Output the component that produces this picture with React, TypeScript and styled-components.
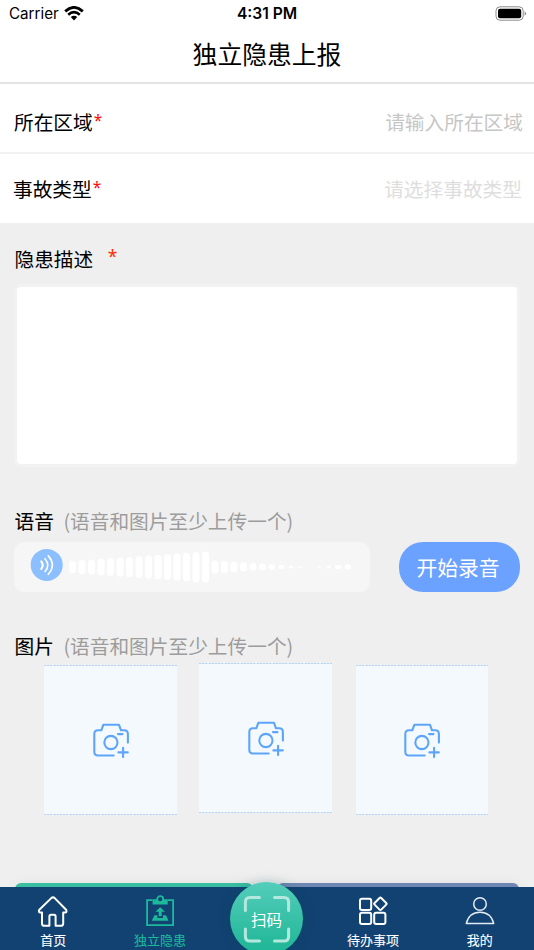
import React from 'react';
import styled, { createGlobalStyle } from 'styled-components';

const GlobalStyle = createGlobalStyle`
  * { box-sizing: border-box; }
  html, body { margin: 0; padding: 0; }
  body { overflow: hidden; }
`;

const Screen = styled.div`
  position: relative;
  width: 534px;
  height: 950px;
  overflow: hidden;
  display: flex;
  flex-direction: column;
  background: #efefef;
  color: #000;
  font-family: "Noto Sans CJK SC", sans-serif;
  font-size: 19.7px;
  font-weight: 400;
`;

const StatusBar = styled.div`
  flex: none;
  display: grid;
  grid-template-columns: 1fr auto 1fr;
  align-items: center;
  height: 28px;
  padding: 0 7px 0 9px;
  background: #fff;
  font-family: Inter, sans-serif;
  font-size: 15.2px;
  line-height: 28px;
`;

const Carrier = styled.div`
  display: flex;
  align-items: center;
  gap: 5px;
  font-weight: 400;
  svg { margin-top: -2px; }
`;

const Clock = styled.div`
  margin-right: 2px;
  font-weight: 600;
  font-size: 15.6px;
`;

const Battery = styled.div`
  display: flex;
  justify-content: flex-end;
  svg { margin-top: -1px; }
`;

const TitleBar = styled.h1`
  flex: none;
  height: 56px;
  margin: 0;
  border-bottom: 2px solid #e4e4e4;
  background: #fff;
  text-align: center;
  font-size: 24.8px;
  font-weight: 400;
  line-height: 50px;
`;

const FormRow = styled.div<{ $height: number; $inset?: number; $divider?: boolean }>`
  flex: none;
  display: flex;
  justify-content: space-between;
  align-items: center;
  height: ${p => p.$height}px;
  padding: ${p => (p.$divider ? 6 : 0)}px ${p => 11 + (p.$inset ?? 0)}px 0 ${p => 14 - (p.$inset ?? 0)}px;
  border-bottom: ${p => (p.$divider ? '2px solid #f2f2f2' : 'none')};
  background: #fff;
`;

const Label = styled.span`
  white-space: nowrap;
`;

const Required = styled.span<{ $gap?: number; $color?: string; $size?: number }>`
  margin-left: ${p => p.$gap ?? 1}px;
  color: ${p => p.$color ?? '#ff0a0a'};
  font-family: "Noto Sans", sans-serif;
  font-size: ${p => p.$size ?? 15.5}px;
  font-weight: 400;
  line-height: 0;
  vertical-align: 4px;
`;

const Placeholder = styled.span<{ $color: string }>`
  color: ${p => p.$color};
`;

const Content = styled.main`
  flex: 1;
  min-height: 0;
  padding: 0 14px 0 14px;
`;

const SectionTitle = styled.div<{ $height: number; $line: number }>`
  height: ${p => p.$height}px;
  line-height: ${p => p.$line}px;
  padding-left: 0.5px;
  white-space: nowrap;
`;

const Strong = styled.span`
  -webkit-text-stroke: 0.12px currentColor;
`;

const Hint = styled.span`
  margin-left: 9.5px;
  color: #9c9c9c;
`;

const Description = styled.textarea`
  display: block;
  width: 506px;
  height: 183px;
  margin: 0;
  padding: 10px;
  border: 3px solid #f2f2f2;
  border-radius: 7px;
  background: #fff;
  resize: none;
  outline: none;
  font: inherit;
`;

const VoiceRow = styled.div`
  display: flex;
  justify-content: space-between;
  height: 50px;
`;

const VoiceTrack = styled.div`
  width: 356px;
  height: 50px;
  border-radius: 10px;
  background: #f6f6f6;
`;

const RecordButton = styled.button`
  width: 121px;
  height: 50px;
  padding: 0 2px 1px 0;
  margin-right: 0.5px;
  border: 0;
  border-radius: 24px;
  background: #6ba1ff;
  color: #fff;
  font: inherit;
  font-size: 20.8px;
`;

const PhotoRow = styled.div`
  display: flex;
  align-items: flex-start;
  padding-left: 30px;
`;

const dashes = 'repeating-linear-gradient(90deg, #b4d4f8 0 2px, #e3effc 2px 3.2px)';

const PhotoCard = styled.button<{ $left?: number; $top?: number; $width?: number }>`
  display: flex;
  align-items: center;
  justify-content: center;
  width: ${p => p.$width ?? 133}px;
  height: 150px;
  margin: ${p => p.$top ?? 0}px 0 0 ${p => p.$left ?? 0}px;
  padding: 1px 0 0;
  border: 0;
  background: ${dashes} 0 0 / 100% 1px no-repeat, ${dashes} 0 100% / 100% 1px no-repeat, #f4f9fe;
`;

const Actions = styled.div`
  display: flex;
  justify-content: space-between;
  padding: 0 1px;
  margin-top: 68px;
`;

const Action = styled.div<{ $color: string; $width: number }>`
  width: ${p => p.$width}px;
  height: 44px;
  border-radius: 6px;
  background: ${p => p.$color};
  box-shadow: 0 0 14px rgba(0, 0, 0, 0.06);
`;

const TabBar = styled.nav`
  position: relative;
  flex: none;
  display: grid;
  grid-template-columns: repeat(5, 106.6px);
  height: 63px;
  background: #114272;
`;

const Tab = styled.div<{ $active?: boolean }>`
  display: flex;
  flex-direction: column;
  align-items: center;
  color: ${p => (p.$active ? '#1cb99b' : '#fff')};
  font-size: 13px;
  line-height: 18px;
  svg { margin: 7px 0 1px; }
`;

const TabLabel = styled.span`
  -webkit-text-stroke: 0.1px currentColor;
`;

const ScanButton = styled.div`
  position: absolute;
  left: 230px;
  top: -5px;
  display: grid;
  place-items: center;
  width: 73px;
  height: 73px;
  border-radius: 50%;
  background: linear-gradient(#54cdbb, #1cb594);
  box-shadow: 0 0 12px rgba(10, 70, 80, 0.3);
  color: #fff;
  font-size: 15.5px;
  line-height: 20px;
  svg, span { grid-area: 1 / 1; }
`;

const waveHeights = [
  12, 14, 15, 16.5, 17.5, 19, 20, 21.5, 23, 24.5, 25.5, 27, 28.5, 30, 31,
  13, 12, 10.5, 9, 7.6, 6.8, 5.6, 4.4, 3, 1.6, 0, 1.6, 3, 4.4, 5.6,
];

const Waveform = () => (
  <svg width="356" height="50" viewBox="0 0 356 50">
    <circle cx="32.7" cy="22.9" r="16" fill="#8cbfff" />
    <g fill="none" stroke="#fff" strokeWidth="1.6" strokeLinecap="round">
      <path d="M27.3 19.4q2.8 3.8 0 7.5" strokeWidth="2.2" />
      <path d="M31 16.7q5.6 6.4 0 12.8" />
      <path d="M34.3 13.9q8.2 9.2 0 18.4" />
    </g>
    {waveHeights.map((h, i) => {
      const w = h < 3.5 ? 5 : h < 6 ? 6.4 : 7;
      return (
        <rect key={i} x={58.6 + i * 9.49 - w / 2} y={25 - h / 2} width={w} height={h}
          rx={Math.min(3, w / 2)} ry={Math.min(3.6, h / 2)} fill="#fff" />
      );
    })}
  </svg>
);

const CameraIcon = () => (
  <svg width="38" height="36" viewBox="0 0 38 36" fill="none" stroke="#5ea5fa" strokeWidth="2.1"
    strokeLinecap="round" strokeLinejoin="round">
    <path d="M21.7 32.5H6q-3.7 0-3.7-3.7V11q0-3.7 3.7-3.7H9.3L11.3 1.8H27L29 7.3h3.2q3.7 0 3.7 3.7v8.6" />
    <circle cx="18.9" cy="19.5" r="6.6" />
    <path d="M26 11.1h4.5M26.4 29.4h9.4M31.1 24.7v9.4" />
  </svg>
);

const WifiIcon = () => (
  <svg width="20" height="15" viewBox="0 0 20 15">
    <path d="M1.2 5.4Q10-2.6 18.8 5.4" fill="none" stroke="#000" strokeWidth="2.8" />
    <path d="M4.2 8.7Q10 3.6 15.8 8.7" fill="none" stroke="#000" strokeWidth="2.6" />
    <path d="M6.8 11.1Q10 8.4 13.2 11.1L10 14.6Z" />
  </svg>
);

const BatteryIcon = () => (
  <svg width="32" height="15" viewBox="0 0 32 15">
    <rect x="1" y="0.8" width="27.2" height="13.4" rx="4" fill="none" stroke="#8b8b8b" />
    <rect x="3" y="2.8" width="23.2" height="9.4" rx="2" />
    <path d="M29.6 5.2q3 2.3 0 4.6Z" fill="#8b8b8b" />
  </svg>
);

const HomeIcon = () => (
  <svg width="32" height="36" viewBox="0 0 32 36" fill="none" stroke="#fff" strokeWidth="2" strokeLinejoin="round">
    <path d="M14.3 4.1 2.3 15.8Q1 18.3 3.6 18.6H5v10.8q0 2.4 2.4 2.4h5V22.4q0-1.6 1.6-1.6h3q1.6 0 1.6 1.6v9.4h5.2q2.4 0 2.4-2.4V18.6h1.6q2.6-.3 1.3-2.8L17.7 4.1q-1.7-1.5-3.4 0Z" />
  </svg>
);

const ReportIcon = () => (
  <svg width="30" height="36" viewBox="0 0 30 36" fill="none" stroke="#1cb99b" strokeWidth="1.8">
    <path d="M7.6 6.2H2.1v25h26v-25h-5.4" />
    <path d="M7.6 5.2h4.1a3.6 3.6 0 0 1 7 0h4v5.2H7.6Z" fill="#1cb99b" stroke="none" />
    <circle cx="15.2" cy="5.2" r="3" fill="#114272" />
    <path d="M15.2 13.2l4.8 4.6h-3.3v4.5h-3v-4.5h-3.3Z" fill="#1cb99b" stroke="none" />
    <path d="M9.4 21.3h3v2.7H18v-2.7h3l2.6 5.5H6.8Z" fill="#1cb99b" stroke="none" />
  </svg>
);

const TodoIcon = () => (
  <svg width="30" height="36" viewBox="0 0 30 36" fill="none" stroke="#fff" strokeWidth="2">
    <rect x="2" y="4.8" width="11.2" height="11.2" rx="2" />
    <rect x="2" y="18.8" width="11.2" height="11.2" rx="2" />
    <rect x="16.2" y="18.8" width="11.2" height="11.2" rx="2" />
    <rect x="17.7" y="5.1" width="9.4" height="9.4" rx="1.2" transform="rotate(45 22.4 9.8)" />
  </svg>
);

const ProfileIcon = () => (
  <svg width="30" height="36" viewBox="0 0 30 36" fill="none" stroke="#e3eaf1" strokeWidth="1.5" strokeLinejoin="round">
    <circle cx="15" cy="10" r="6.3" />
    <path d="M1.3 29.6Q4 18.2 15 18.2t13.7 11.4Z" />
  </svg>
);

const ScanFrame = () => (
  <svg width="48" height="48" viewBox="0 0 48 48" fill="none" stroke="#b4e8de" strokeWidth="3" strokeLinecap="round">
    <path d="M2.4 15.5V7q0-4.6 4.6-4.6h9.5M31.5 2.4H41q4.6 0 4.6 4.6v8.5M45.6 34v7.4q0 4.6-4.6 4.6h-9.5M16.5 46H7q-4.6 0-4.6-4.6V34" />
  </svg>
);

export default function App() {
  return (
    <>
      <GlobalStyle />
      <Screen>
        <StatusBar>
          <Carrier>Carrier<WifiIcon /></Carrier>
          <Clock>4:31 PM</Clock>
          <Battery><BatteryIcon /></Battery>
        </StatusBar>
        <TitleBar>独立隐患上报</TitleBar>
        <FormRow $height={70} $divider>
          <Label>所在区域<Required>*</Required></Label>
          <Placeholder $color="#c6c6c6">请输入所在区域</Placeholder>
        </FormRow>
        <FormRow $height={69} $inset={1}>
          <Label>事故类型<Required>*</Required></Label>
          <Placeholder $color="#dedede">请选择事故类型</Placeholder>
        </FormRow>
        <Content>
          <SectionTitle $height={61} $line={71}>
            隐患描述<Required $gap={14.5} $color="#ff2a00" $size={17.5}>*</Required>
          </SectionTitle>
          <Description aria-label="隐患描述" />
          <SectionTitle $height={75} $line={107}>
            <Strong>语音</Strong><Hint>(语音和图片至少上传一个)</Hint>
          </SectionTitle>
          <VoiceRow>
            <VoiceTrack><Waveform /></VoiceTrack>
            <RecordButton>开始录音</RecordButton>
          </VoiceRow>
          <SectionTitle $height={71} $line={107}>
            <Strong>图片</Strong><Hint>(语音和图片至少上传一个)</Hint>
          </SectionTitle>
          <PhotoRow>
            <PhotoCard $top={2}><CameraIcon /></PhotoCard>
            <PhotoCard $left={22}><CameraIcon /></PhotoCard>
            <PhotoCard $left={24} $top={2} $width={132}><CameraIcon /></PhotoCard>
          </PhotoRow>
          <Actions>
            <Action $color="#39bea2" $width={238} />
            <Action $color="#6e88b3" $width={242} />
          </Actions>
        </Content>
        <TabBar>
          <Tab><HomeIcon /><TabLabel>首页</TabLabel></Tab>
          <Tab $active><ReportIcon /><TabLabel>独立隐患</TabLabel></Tab>
          <div />
          <Tab><TodoIcon /><TabLabel>待办事项</TabLabel></Tab>
          <Tab><ProfileIcon /><TabLabel>我的</TabLabel></Tab>
          <ScanButton><ScanFrame /><span>扫码</span></ScanButton>
        </TabBar>
      </Screen>
    </>
  );
}
